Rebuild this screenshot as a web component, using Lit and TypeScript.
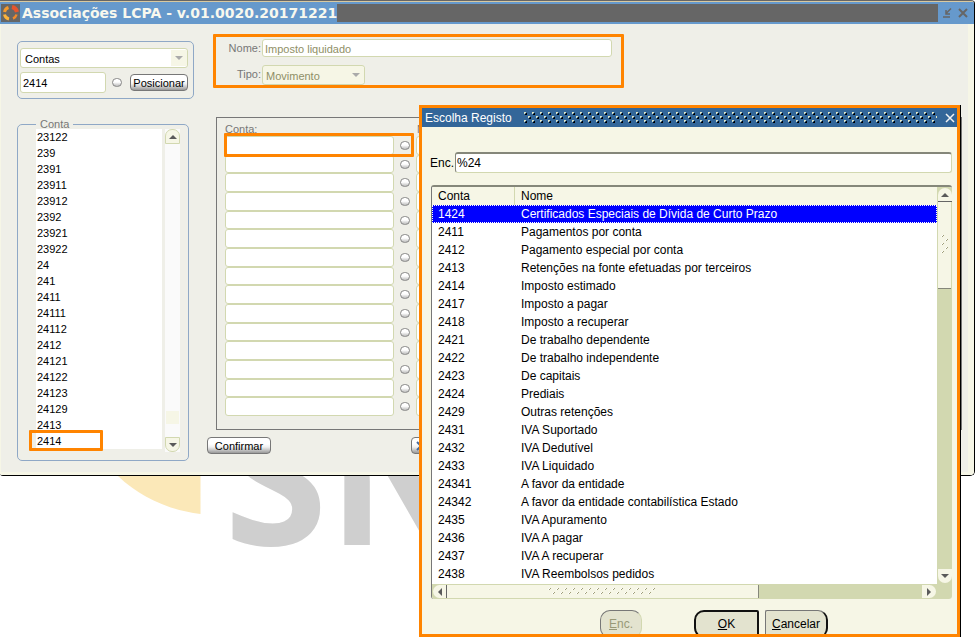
import { LitElement, html, css, svg } from "lit";
import { customElement } from "lit/decorators.js";
import { classMap } from "lit/directives/class-map.js";

const ACCOUNTS = [
  "23122", "239", "2391", "23911", "23912", "2392", "23921", "23922", "24", "241",
  "2411", "24111", "24112", "2412", "24121", "24122", "24123", "24129", "2413", "2414",
];

const RECORDS: [string, string][] = [
  ["1424", "Certificados Especiais de Dívida de Curto Prazo"],
  ["2411", "Pagamentos por conta"],
  ["2412", "Pagamento especial por conta"],
  ["2413", "Retenções na fonte efetuadas por terceiros"],
  ["2414", "Imposto estimado"],
  ["2417", "Imposto a pagar"],
  ["2418", "Imposto a recuperar"],
  ["2421", "De trabalho dependente"],
  ["2422", "De trabalho independente"],
  ["2423", "De capitais"],
  ["2424", "Prediais"],
  ["2429", "Outras retenções"],
  ["2431", "IVA Suportado"],
  ["2432", "IVA Dedutível"],
  ["2433", "IVA Liquidado"],
  ["24341", "A favor da entidade"],
  ["24342", "A favor da entidade contabilística Estado"],
  ["2435", "IVA Apuramento"],
  ["2436", "IVA A pagar"],
  ["2437", "IVA A recuperar"],
  ["2438", "IVA Reembolsos pedidos"],
];

const base = css`
  *, *::before, *::after { box-sizing: border-box; }
  button, input, select { font: inherit; color: inherit; margin: 0; padding: 0; outline: none; }
  button { border: 0; background: none; display: block; }
  svg { display: block; }
  .field {
    height: 18px; width: 100%; min-width: 0; padding: 0 2px;
    border: 1px solid #d2d8b0; border-radius: 3px; background: #fff;
  }
`;

/** Small triangle used by drop-downs and scroll bars. */
const triangle = (dir: "up" | "down" | "left" | "right", fill = "#5a5a5a") => {
  const paths = {
    up: "M0 6H8L4 2Z", down: "M0 2H8L4 6Z", left: "M6 0V8L2 4Z", right: "M2 0V8L6 4Z",
  };
  return html`<svg width="8" height="8" viewBox="0 0 8 8" aria-hidden="true">
    ${svg`<path d=${paths[dir]} fill=${fill} />`}
  </svg>`;
};

@customElement("record-dialog")
export class RecordDialog extends LitElement {
  static styles = [base, css`
    :host {
      display: flex; flex-direction: column; overflow: hidden;
      border: 3px solid #ff8400; background: #f6f6e6; color: #000;
      box-shadow: 1px 0 #000;
    }
    .title {
      display: flex; align-items: center; height: 19px; flex: none;
      background: #336699; color: #fff; padding: 0 2px 0 3px;
    }
    h2 { margin: 0; font: inherit; flex: none; width: 99px; white-space: nowrap; }
    .texture { flex: 1; height: 11px; min-width: 0; }
    .close { width: 18px; display: grid; place-items: end; }
    .search { display: flex; align-items: center; margin: 25px 5px 12px 8px; flex: none; }
    .search label { width: 25px; }
    .search .field { flex: 1; height: 21px; border-top: 2px solid #85877a; border-left-color: #85877a; padding: 0 1px; }
    .list {
      flex: 1; min-height: 0; margin: 0 5px 0 9px; display: grid;
      grid-template-columns: 1fr 15px; grid-template-rows: 1fr 15px;
      background: #fff; border-left: 1px solid #777; border-top: 2px solid #85877a;
      border-radius: 3px; overflow: hidden;
    }
    .view { overflow: hidden; }
    table { width: 100%; border-collapse: separate; border-spacing: 0; table-layout: fixed; }
    tr { height: 18px; }
    th, td { padding: 0 0 0 6px; text-align: left; font-weight: normal; line-height: 18px; white-space: nowrap; }
    th { background: #f6f6e6; }
    th:first-child { width: 83px; border-right: 1px solid #d2d8b0; }
    .selected { background: #0000ff; color: #fff; outline: 1px dotted #fff; outline-offset: -1px; }
    .vbar, .hbar { background: #d2d8b0; display: flex; }
    .vbar { flex-direction: column; padding: 1px; }
    .hbar { padding: 1px; }
    .spacer { flex: 1; }
    .arrow { display: grid; place-items: center; width: 14px; height: 14px; background: #f6f6e6; flex: none; }
    .arrow.up { border-radius: 7px 7px 0 0; border-bottom: 1px solid #666; }
    .arrow.down { border-radius: 0 0 7px 7px; }
    .arrow.left { border-radius: 7px 0 0 7px; border-right: 1px solid #666; height: 13px; }
    .arrow.right { border-radius: 0 7px 7px 0; height: 13px; }
    .thumb { background: #f6f6e6; display: grid; place-items: center; }
    .vbar .thumb { height: 87px; border-bottom: 1px solid #85877a; }
    .hbar .thumb { width: 62%; border-right: 1px solid #85877a; }
    .corner { background: #d2d8b0; }
    footer {
      flex: none; height: 35px; padding: 11px 129px 0 0; overflow: hidden;
      display: flex; justify-content: flex-end; align-items: flex-start;
    }
    footer button {
      height: 28px; background: #e3e3cf; border: 1px solid #777; padding: 0 3px;
      text-align: center; flex: none;
    }
    .find { width: 42px; border-radius: 10px; color: #999977; border-right-color: #d2d8b0; margin-right: 52px; }
    .ok { width: 65px; border: 2px solid #111; border-radius: 10px 2px 2px 10px; margin-right: 6px; }
    .cancel { width: 63px; border-radius: 2px 10px 10px 2px; border-right: 2px solid #111; }
  `];

  /** Diagonal two-tone ticks in the middle of a scroll thumb. */
  private grip(width: number, height: number) {
    return html`<svg width=${width} height=${height} aria-hidden="true">
      ${svg`<defs><pattern id="g" width="8" height="8" patternUnits="userSpaceOnUse">
        <path d="M2 0h1v1h-1v1h-1v-1h1zM6 4h1v1h-1v1h-1v-1h1z" fill="#a09f78" />
        <path d="M1 0h1v1h-1v1h-1v-1h1zM5 4h1v1h-1v1h-1v-1h1z" fill="#fff" />
      </pattern></defs><rect width="100%" height="100%" fill="url(#g)" />`}
    </svg>`;
  }

  render() {
    return html`
      <div class="title">
        <h2>Escolha Registo</h2>
        <svg class="texture" aria-hidden="true">
          <defs>
            <pattern id="t" width="8" height="8" patternUnits="userSpaceOnUse">
              <path d="M2 1h1v2h-2v-1h1zM6 5h1v2h-2v-1h1z" fill="#000" />
              <path d="M0 0h2v1h-1v1h-1zM4 4h2v1h-1v1h-1z" fill="#dfe3c4" />
            </pattern>
          </defs>
          <rect width="100%" height="100%" fill="url(#t)" />
        </svg>
        <button class="close" aria-label="Fechar">
          <svg width="10" height="10" viewBox="0 0 10 10">
            <path d="M1 1L9 9M9 1L1 9" stroke="#f3f3f3" stroke-width="1.500" />
          </svg>
        </button>
      </div>
      <div class="search">
        <label for="find">Enc.</label><input id="find" class="field" .value=${"%24"} />
      </div>
      <div class="list">
        <div class="view">
          <table>
            <thead><tr><th scope="col">Conta</th><th scope="col">Nome</th></tr></thead>
            <tbody>
              ${RECORDS.map(([code, name], i) => html`
                <tr class=${classMap({ selected: i === 0 })}><td>${code}</td><td>${name}</td></tr>`)}
            </tbody>
          </table>
        </div>
        <div class="vbar">
          <button class="arrow up" aria-label="Subir">${triangle("up")}</button>
          <div class="thumb">${this.grip(8, 20)}</div>
          <div class="spacer"></div>
          <button class="arrow down" aria-label="Descer">${triangle("down")}</button>
        </div>
        <div class="hbar">
          <button class="arrow left" aria-label="Esquerda">${triangle("left")}</button>
          <div class="thumb">${this.grip(108, 7)}</div>
          <div class="spacer"></div>
          <button class="arrow right" aria-label="Direita">${triangle("right")}</button>
        </div>
        <div class="corner"></div>
      </div>
      <footer>
        <button class="find" disabled><u>E</u>nc.</button>
        <button class="ok"><u>O</u>K</button>
        <button class="cancel"><u>C</u>ancelar</button>
      </footer>
    `;
  }
}

@customElement("app-root")
export class AppRoot extends LitElement {
  static styles = [base, css`
    :host {
      display: block; position: relative; height: 100vh; min-height: 480px; overflow: hidden;
      background: #fff; color: #000;
      font: 11px/13px "Liberation Sans", Arial, sans-serif;
    }
    .watermark { position: absolute; left: 0; top: 400px; }
    .brand { font: 700 188px "Open Sans", sans-serif; fill: #cfcfcf; }
    .window {
      position: relative; margin-right: 1px; background: #efefe8;
      border-top: 1px solid #666; border-right: 1px solid #000; border-bottom: 1px solid #000;
      border-radius: 0 4px 5px 3px; overflow: hidden;
    }
    .bar {
      display: flex; align-items: center; height: 23px; border-top: 1px solid #d9c9a0;
      background: #6699cc; color: #f8f8ee; padding: 0 4px 0 1px;
    }
    .logo { background: #666; flex: none; }
    h1 { margin: 0 0 0 2px; font: bold 14px/18px "DejaVu Sans", sans-serif; white-space: nowrap; }
    .strip { flex: 1; height: 18px; background: #666; }
    .tool { width: 15px; display: grid; place-items: center; }
    .tool.min { margin-right: 1px; margin-left: 1px; }
    .body {
      display: flex; border: solid #f6f6e6; border-width: 0 6px 3px 1px;
      padding: 0 6px 11px 16px;
    }
    aside { width: 177px; flex: none; padding-top: 17px; margin-right: 13px; }
    .picker {
      height: 58px; border: 1px solid #8fa8c6; border-radius: 5px; padding: 6px 5px 0 2px;
      display: flex; flex-direction: column; gap: 4px;
    }
    .drop { display: grid; grid-template-columns: 1fr 16px; align-items: center; border: 1px solid #d2d8b0; border-radius: 3px; background: #fff; height: 20px; }
    .drop select { grid-area: 1 / 1 / 2 / 3; appearance: none; border: 0; background: none; width: 100%; height: 18px; padding: 2px 16px 0 4px; opacity: 1; }
    .drop .tip { grid-area: 1 / 2; height: 16px; display: grid; place-items: center; pointer-events: none; background: #f6f6e6; }
    .drop.off { background: #f6f6e6; color: #8f8f66; width: 103px; }
    .drop.off select { padding-left: 3px; }
    .seek { display: flex; align-items: center; }
    .seek .field { width: 86px; height: 21px; margin-right: 6px; }
    .dot {
      width: 10px; height: 9px; border: 1px solid #888; border-radius: 5px; flex: none;
      background: linear-gradient(#fff 45%, #bbb);
    }
    .push {
      height: 17px; border: 1px solid #777; border-radius: 4px; flex: none; white-space: nowrap;
      background: linear-gradient(#fff 40%, #f0f0f0 60%, #999); line-height: 17px; text-align: center;
    }
    .go { width: 58px; margin-left: 8px; }
    .accounts {
      margin: 19px 5px 0 0; padding: 0 8px 9px 18px; min-width: 0; height: 343px;
      border: 1px solid #8fa8c6; border-radius: 5px; color: #000;
      display: block;
    }
    legend { color: #777; padding: 0 4px; height: 12px; line-height: 12px; }
    .scroller { display: flex; justify-content: space-between; height: 323px; margin-top: -1px; }
    ul { list-style: none; margin: 0; padding: 0; width: 126px; }
    li { background: #fff; height: 16px; line-height: 17px; padding-left: 1px; position: relative; }
    .mark { position: absolute; border: 3px solid #ff8400; border-radius: 1px; pointer-events: none; }
    .mark-item { left: -7px; top: -3px; width: 74px; height: 21px; }
    .track { width: 15px; display: flex; flex-direction: column; background: #fafafa; }
    .step { height: 15px; display: grid; place-items: center; background: #f6f6e6; border: 1px solid #d2d8b0; }
    .step.up { border-radius: 7px 7px 0 0; }
    .step.down { border-radius: 0 0 7px 7px; }
    .thumb { height: 13px; margin: auto 1px 13px; background: #f6f6e6; }
    main { flex: 1; min-width: 0; padding-top: 10px; }
    .header {
      width: 411px; height: 54px; margin-left: 6px; border: 3px solid #ff8400; border-radius: 1px;
      display: grid; grid-template-columns: 46px 350px; align-content: start; row-gap: 8px;
      padding-top: 2px; color: #777;
    }
    .header label { text-align: right; padding-right: 1px; line-height: 18px; }
    .header .field { color: #8f8f66; padding-top: 2px; }
    .detail { margin: 29px 0 7px 9px; height: 313px; border: 1px solid #777; padding: 5px 8px 0; }
    .cols, .row { display: grid; grid-template-columns: 169px 21px 1fr; column-gap: 0; align-items: center; justify-items: center; }
    .cols > :last-child, .row > :last-child { margin-left: 2px; }
    .cols { height: 13px; color: #777; justify-items: start; }
    .rows { display: flex; flex-direction: column; height: 280px; position: relative; }
    .row { flex: 1; min-height: 0; }
    .row .field { height: 100%; }
    .mark-row { left: -1px; top: -3px; width: 190px; height: 24px; }
    .actions { display: flex; gap: 140px; }
    .confirm { width: 64px; }
    .cancel { width: 64px; padding-left: 4px; }
    record-dialog {
      position: absolute; left: 419px; right: 16px; top: 105px; bottom: 0;
      font: 12px/14px "Liberation Sans", Arial, sans-serif;
    }
  `];

  render() {
    return html`
      <svg class="watermark" width="700" height="237" viewBox="0 400 700 237" aria-hidden="true">
        <path d="M118 470V476C140 497 168 510 200.500 514V470Z" fill="#fbe8b8" />
        <text class="brand" x="224" y="545">SN</text>
      </svg>
      <div class="window">
        <header class="bar">
          <svg class="logo" width="19" height="18" viewBox="0 0 19 18" aria-hidden="true">
            <g fill="none" stroke-width="3">
              <path d="M7.500 3.500A6 6 0 0 0 3.500 8" stroke="#f59a2c" />
              <path d="M11 3A6.500 6.500 0 0 1 16 8" stroke="#e8552d" stroke-width="4" />
              <path d="M3.500 10.500A6 6 0 0 0 8 15" stroke="#fbb33a" />
              <path d="M15.500 10.500A6 6 0 0 1 12 14.500" stroke="#f28a2a" stroke-width="2.500" />
            </g>
          </svg>
          <h1>Associações LCPA - v.01.0020.20171221</h1>
          <div class="strip"></div>
          <button class="tool min" aria-label="Minimizar">
            <svg width="10" height="10" viewBox="0 0 10 10">
              <path d="M1 9H8M9 0.500L4 5.500M4 2V6H8" stroke="#666" stroke-width="1.500" fill="none" />
            </svg>
          </button>
          <button class="tool" aria-label="Fechar">
            <svg width="10" height="10" viewBox="0 0 10 10">
              <path d="M1 1L9 9M9 1L1 9" stroke="#666" stroke-width="2" />
            </svg>
          </button>
        </header>
        <div class="body">
          <aside>
            <div class="picker">
              <div class="drop">
                <select aria-label="Lista"><option>Contas</option></select>
                <span class="tip">${triangle("down", "#aaa")}</span>
              </div>
              <div class="seek">
                <input class="field" aria-label="Código" .value=${"2414"} />
                <button class="dot" aria-label="Lista de valores"></button>
                <button class="push go">Posicionar</button>
              </div>
            </div>
            <fieldset class="accounts">
              <legend>Conta</legend>
              <div class="scroller">
                <ul>
                  ${ACCOUNTS.map((a, i) => html`<li>${a}${i === ACCOUNTS.length - 1
                    ? html`<span class="mark mark-item"></span>` : ""}</li>`)}
                </ul>
                <div class="track">
                  <button class="step up" aria-label="Subir">${triangle("up")}</button>
                  <div class="thumb"></div>
                  <button class="step down" aria-label="Descer">${triangle("down")}</button>
                </div>
              </div>
            </fieldset>
          </aside>
          <main>
            <section class="header">
              <label for="nome">Nome:</label>
              <input id="nome" class="field" .value=${"Imposto liquidado"} disabled />
              <label for="tipo">Tipo:</label>
              <div class="drop off">
                <select id="tipo" disabled><option>Movimento</option></select>
                <span class="tip">${triangle("down", "#aaa")}</span>
              </div>
            </section>
            <section class="detail">
              <div class="cols"><span>Conta:</span><span></span><span>Nome:</span></div>
              <div class="rows">
                ${Array.from({ length: 15 }, (_, i) => html`
                  <div class="row">
                    <input class="field" aria-label="Conta ${i + 1}" />
                    <button class="dot" aria-label="Escolher conta ${i + 1}"></button>
                    <input class="field" aria-label="Nome ${i + 1}" />
                  </div>`)}
                <span class="mark mark-row"></span>
              </div>
            </section>
            <div class="actions">
              <button class="push confirm">Confirmar</button>
              <button class="push cancel" aria-label="Cancelar">
                <svg width="10" height="10" viewBox="0 0 10 10">
                  <path d="M1 1L9 9M9 1L1 9" stroke="#4a6a9a" stroke-width="2" />
                </svg>
              </button>
            </div>
          </main>
        </div>
      </div>
      <record-dialog role="dialog" aria-label="Escolha Registo"></record-dialog>
    `;
  }
}
